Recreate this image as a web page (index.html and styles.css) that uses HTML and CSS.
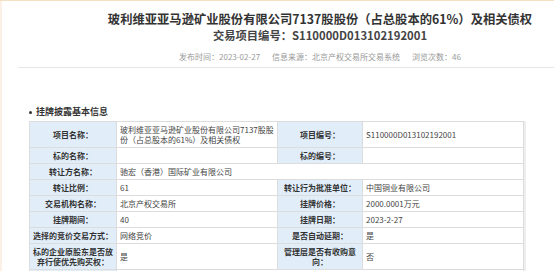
FILE: index.html
```html
<!DOCTYPE html>
<html lang="zh-CN">
<head>
<meta charset="utf-8">
<title>挂牌披露基本信息</title>
<link rel="stylesheet" href="styles.css">
</head>
<body>
<div class="page">
  <div class="panel">
    <header class="head">
      <h1 class="title">玻利维亚亚马逊矿业股份有限公司7137股股份（占总股本的61%）及相关债权</h1>
      <div class="code">交易项目编号：S110000D013102192001</div>
      <div class="meta">
        <span>发布时间：2023-02-27</span>
        <span>信息来源：北京产权交易所交易系统</span>
        <span>浏览次数：46</span>
      </div>
    </header>
    <div class="rule"></div>
    <section class="info">
      <h2 class="sec"><span class="dot"></span>挂牌披露基本信息</h2>
      <div class="tablewrap">
        <table class="grid">
          <colgroup>
            <col class="c1"><col class="c2"><col class="c3"><col class="c4">
          </colgroup>
          <tr>
            <th>项目名称：</th>
            <td>玻利维亚亚马逊矿业股份有限公司7137股股份（占总股本的61%）及相关债权</td>
            <th>项目编号：</th>
            <td>S110000D013102192001</td>
          </tr>
          <tr>
            <th>标的名称：</th>
            <td></td>
            <th>标的编号：</th>
            <td></td>
          </tr>
          <tr>
            <th>转让方名称：</th>
            <td colspan="3">驰宏（香港）国际矿业有限公司</td>
          </tr>
          <tr>
            <th>转让比例：</th>
            <td>61</td>
            <th>转让行为批准单位：</th>
            <td>中国铜业有限公司</td>
          </tr>
          <tr>
            <th>交易机构名称：</th>
            <td>北京产权交易所</td>
            <th>挂牌价格：</th>
            <td>2000.0001万元</td>
          </tr>
          <tr>
            <th>挂牌期间：</th>
            <td>40</td>
            <th>挂牌日期：</th>
            <td>2023-2-27</td>
          </tr>
          <tr>
            <th>选择的竞价交易方式：</th>
            <td>网络竞价</td>
            <th>是否自动延期：</th>
            <td>是</td>
          </tr>
          <tr>
            <th>标的企业原股东是否放弃行使优先购买权：</th>
            <td>是</td>
            <th>管理层是否有收购意向：</th>
            <td>否</td>
          </tr>
          <tr class="tail">
            <th></th>
            <td colspan="3"></td>
          </tr>
        </table>
      </div>
    </section>
  </div>
</div>
</body>
</html>
```
FILE: styles.css
```css
html, body {
  margin: 0;
  padding: 0;
}
body {
  background: #fdf1e6;
  font-family: "Noto Sans CJK SC", "Noto Sans", sans-serif;
  color: #333;
  overflow: hidden;
}
.page {
  border-top: 1px solid #f2e1c2;
  height: 270px;
}
.panel {
  margin-left: 2px;
  background: #fff;
  height: 100%;
}
.head {
  padding: 11px 0 0 84px;
  text-align: center;
}
.title {
  margin: 0;
  font-size: 12.3px;
  line-height: 15px;
  font-weight: bold;
  color: #333;
}
.code {
  margin-top: 2px;
  font-size: 11.3px;
  line-height: 12px;
  font-weight: bold;
  color: #444;
}
.meta {
  margin-top: 11px;
  display: flex;
  justify-content: center;
  gap: 12px;
  font-size: 8px;
  line-height: 10px;
  color: #999;
}
.rule {
  margin: 5px 0 0 16px;
  height: 1px;
  background: #e6e6e6;
}
.info {
  padding-left: 27px;
}
.sec {
  margin: 38px 0 3px 0;
  font-size: 9px;
  line-height: 12px;
  font-weight: bold;
  color: #333;
  display: flex;
  align-items: center;
  gap: 4px;
}
.dot {
  width: 3px;
  height: 3px;
  border-radius: 50%;
  background: #333;
}
.tablewrap {
  width: 494px;
  border-right: 3px solid #eeeeee;
}
.grid {
  width: 494px;
  border-collapse: collapse;
  table-layout: fixed;
  font-size: 8px;
  line-height: 10px;
}
.c1 { width: 87px; }
.c2 { width: 161px; }
.c3 { width: 85px; }
.c4 { width: 161px; }
.grid th, .grid td {
  border: 1px solid #dcdcdc;
  padding: 3px 2px 2px;
  vertical-align: middle;
}
.grid th {
  background: #e1eefa;
  font-weight: bold;
  text-align: center;
  color: #333;
}
.grid td {
  text-align: left;
  color: #444;
  padding-left: 3px;
}
.grid .tail th,
.grid .tail td {
  height: 20px;
}
```
